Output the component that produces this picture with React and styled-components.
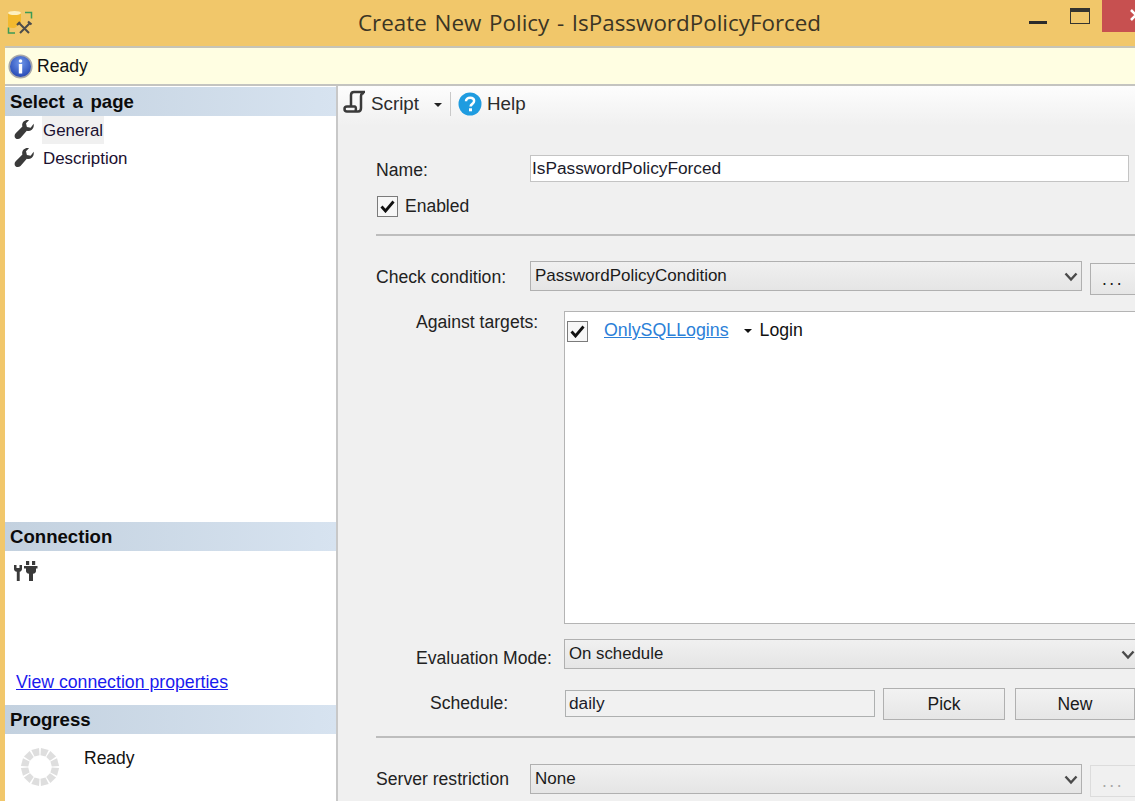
import React from "react";
import styled, { createGlobalStyle } from "styled-components";

const Global = createGlobalStyle`
  html, body { margin: 0; padding: 0; background: #f0f0f0; overflow: hidden; }
  * { box-sizing: border-box; }
`;
const FONT = `"Liberation Sans", Arial, sans-serif`;

const Page = styled.div`
  width: 1135px; height: 801px; overflow: hidden; display: flex; flex-direction: column;
  background: #f1c76b; font-family: ${FONT}; font-size: 17.5px; color: #111;
`;
const TitleBar = styled.header`
  height: 46px; flex: none; display: flex; align-items: flex-start; background: #f1c76a;
`;
const AppIcon = styled.svg`
  width: 26px; height: 26px; margin: 10px 0 0 7px; flex: none;
`;
const Title = styled.h1`
  margin: 10px 0 0 325px; font: 400 22.4px/26px "Open Sans", sans-serif; word-spacing: 1.9px; color: #3b3524; white-space: nowrap;
`;
const WindowControls = styled.div`
  margin-left: auto; display: flex; align-items: flex-start; height: 32px;
`;
const MinimizeGlyph = styled.span`
  width: 18px; height: 3px; margin: 21px 23px 0 0; background: #2b2b2b;
`;
const MaximizeGlyph = styled.span`
  width: 20px; height: 16px; margin: 8px 12px 0 0; border: 1.5px solid #35342f; border-top-width: 4px;
`;
const CloseButton = styled.div`
  width: 33px; height: 32px; background: #c75050; padding: 9px 0 0 28px; overflow: hidden;
`;
const Client = styled.div`
  flex: 1; min-height: 0; margin-left: 5px; display: flex; flex-direction: column; background: #f0f0f0;
`;
const InfoBar = styled.div`
  height: 40px; flex: none; display: flex; align-items: center; gap: 4px; padding: 1px 0 0 3px;
  background: #fffee2; border-top: 2px solid #c6c4b6; border-bottom: 2px solid #c4c4c0; font-size: 17.6px;
`;
const Panels = styled.div`
  flex: 1; min-height: 0; display: flex;
`;
const Sidebar = styled.aside`
  width: 333px; flex: none; display: flex; flex-direction: column; background: #fff;
  border-right: 2px solid #c8c8c8; padding-top: 1px;
`;
const SectionHeader = styled.h2`
  margin: 0; height: 29px; padding-left: 5px; flex: none; font: 700 18.6px/30px ${FONT}; color: #0b0b0b;
  word-spacing: 2.5px; background: linear-gradient(90deg, #c3d1df, #d7e3f0);
`;
const PageList = styled.div`
  flex: 1; display: flex; flex-direction: column; padding: 0 0 0 9px;
`;
const PageItem = styled.div`
  height: 28px; display: flex; align-items: center; gap: 8px; font-size: 16.9px; color: #1b1030;
`;
const PageLabel = styled.span`
  padding: 0 1px; height: 28px; line-height: 29px;
  background: ${p => (p.$selected ? "#f0f0f0" : "transparent")};
`;
const ConnectionBody = styled.div`
  height: 154px; flex: none; display: flex; flex-direction: column; padding: 9px 0 0 9px;
`;
const ConnectionLink = styled.a`
  margin: auto 0 12px 2px; color: #1a1aee; text-decoration: underline; font-size: 17.7px;
`;
const ProgressBody = styled.div`
  height: 67px; flex: none; display: flex; align-items: flex-start; padding: 13px 0 0 15px; gap: 24px;
`;
const ProgressText = styled.span`
  margin-top: 1px; font-size: 17.5px;
`;
const Main = styled.main`
  flex: 1; min-width: 0; overflow: hidden; display: flex; flex-direction: column;
`;
const Toolbar = styled.div`
  height: 40px; flex: none; display: flex; align-items: flex-start; padding: 4px 0 0 5px; font-size: 18.8px; color: #2c2c2c;
  background: linear-gradient(#fdfdfd, #f0f0f0);
`;
const ToolLabel = styled.span`
  margin: 3px 0 0 ${p => p.$gap}px; line-height: 22px;
`;
const Caret = styled.span`
  width: 0; height: 0; margin: 13px 8px 0 15px; border: 4px solid transparent; border-top-color: #222; border-bottom: 0;
`;
const ToolSeparator = styled.span`
  width: 1px; height: 24px; margin: 2px 7px 0 0; background: #c9c9c9;
`;
const Form = styled.div`
  flex: 1; padding: 29px 0 0 38px; width: 798px; display: flex; flex-direction: column; align-items: flex-start;
`;
const Row = styled.div`
  display: flex; align-items: flex-start; margin-top: ${p => p.$top || 0}px; flex: none;
`;
const Label = styled.label`
  flex: none; width: ${p => p.$width}px; padding-top: ${p => p.$pad}px; padding-left: ${p => p.$indent || 0}px;
  font-size: 17.6px; line-height: 20px; color: #222; white-space: nowrap;
`;
const TextField = styled.div`
  width: ${p => p.$width}px; height: 27px; flex: none; border: 1.5px solid ${p => p.$muted ? "#aeb0b0" : "#c4c4c4"};
  background: ${p => p.$muted ? "#f1f1f1" : "#fff"}; padding-left: ${p => p.$inset}px; font-size: 17.3px; line-height: 25px; color: #1b1b2b;
`;
const CheckRow = styled.div`
  display: flex; align-items: center; gap: 7px; margin: 14px 0 0 1px; font-size: 17.5px; color: #222;
`;
const CheckBox = styled.span`
  width: 21px; height: 21px; flex: none; display: flex; align-items: center; justify-content: center;
  background: #f7f7f7; border: 1.5px solid #7b7b7b;
`;
const Divider = styled.hr`
  width: 100%; height: 2px; border: 0; flex: none; margin: ${p => p.$top}px 0 0; background: #bdbdbd;
`;
const Select = styled.div`
  width: ${p => p.$width}px; height: 30px; flex: none; display: flex; align-items: center; justify-content: space-between;
  padding: 0 ${p => p.$arrow}px 0 4px; border: 1.5px solid #b0b0b0; font-size: ${p => p.$size || 17}px; color: #1b1b1b;
  background: linear-gradient(#f0f0f0, #e5e5e5);
`;
const Chevron = styled.svg`
  width: 14px; height: 10px; flex: none; margin-top: 1px;
`;
const Button = styled.button`
  width: ${p => p.$width}px; height: 32px; flex: none; margin: ${p => p.$top || 0}px 0 0 ${p => p.$left}px;
  padding: 0; border: 1.5px solid #b0b0b0;
  background: linear-gradient(#f2f2f2, #e6e6e6);
  font: 400 17.5px ${FONT}; color: #1b1b1b;
`;
const DotsButton = styled(Button)`
  padding-left: 11px; text-align: left; letter-spacing: 2.5px;
  ${p => p.disabled && "border-color: #dcdcdc; background: #f0f0f0; color: #a8a8a8;"}
`;
const TargetList = styled.div`
  width: 580px; height: 313px; flex: none; display: flex; align-items: flex-start; gap: 16px; padding: 8px 0 0 2px;
  background: #fff; border: 1.5px solid #b4b4b4;
`;
const TargetCheck = styled(CheckBox)`
  margin-top: 1px;
`;
const TargetLink = styled.a`
  color: #2b7fd8; text-decoration: underline; font-size: 17.8px; line-height: 20px;
`;
const TargetType = styled.span`
  display: flex; align-items: center; gap: 8px; margin-left: -1px; font-size: 17.7px; line-height: 20px; color: #111;
`;
const SmallCaret = styled.span`
  width: 0; height: 0; margin: 1px 0 0 0; border: 4px solid transparent; border-top-color: #111; border-bottom: 0;
`;

const Wrench = () => (
  <svg width="20" height="20" viewBox="0 0 20 20" style={{ flex: "none" }}>
    <path fill="#3a3a3a" d="M19.6 3.800c.5 2.300-.1 4.500-1.800 5.900-1.500 1.200-3.400 1.500-5 1L6.500 18c-1.300 1.400-3.700 1.500-5 .2-1.300-1.300-1.200-3.600.2-4.900l6.700-6.700C7.900 4.900 8.200 3 9.600 1.600 11 .2 13.200-.3 15 .3l-3 3 .9 3.700 3.800.8z" />
  </svg>
);
const ChevronIcon = () => (
  <Chevron viewBox="0 0 14 10">
    <path d="M1.500 1.500 7 7.500l5.500-6" fill="none" stroke="#4a4a4a" strokeWidth="2.400" />
  </Chevron>
);
const Tick = () => (
  <svg width="15" height="13" viewBox="0 0 15 13">
    <path d="M1.500 6.500 5.500 11 13.500 1.500" fill="none" stroke="#111" strokeWidth="2.800" />
  </svg>
);
const spokes = Array.from({ length: 12 }, (_, i) => i * 30 + 15);

export default function App() {
  return (
    <Page>
      <Global />
      <TitleBar>
        <AppIcon viewBox="0 0 26 26">
          <path d="M1 3v13c0 1 2 2 5 2 2 0 3-.5 4-2l4-4V3z" fill="#f2b92e" />
          <ellipse cx="7.500" cy="3" rx="6.500" ry="2" fill="#fdf0c0" />
          <path d="M18 2.500h6.500v6M1.500 17.500v5.500h6.500" fill="none" stroke="#3d9a55" strokeWidth="1.500" />
          <path d="M12 13 22 23M23 13 13 23" stroke="#4b4b4b" strokeWidth="2" />
          <path d="M10 15l3-3M21 11.500l3.500 3" stroke="#4b4b4b" strokeWidth="2.200" fill="none" />
        </AppIcon>
        <Title>Create New Policy - IsPasswordPolicyForced</Title>
        <WindowControls>
          <MinimizeGlyph />
          <MaximizeGlyph />
          <CloseButton>
            <svg width="12" height="12" viewBox="0 0 12 12" style={{ display: "block" }}>
              <path d="M1 1l10 10M11 1 1 11" stroke="#fff" strokeWidth="2.600" />
            </svg>
          </CloseButton>
        </WindowControls>
      </TitleBar>
      <Client>
        <InfoBar>
          <svg width="25" height="25" viewBox="0 0 25 25" style={{ flex: "none" }}>
            <defs>
              <radialGradient id="infoFill" cx="50%" cy="35%" r="70%">
                <stop offset="0" stopColor="#6f97ea" />
                <stop offset="1" stopColor="#1d3fae" />
              </radialGradient>
            </defs>
            <circle cx="12.500" cy="12.500" r="11.300" fill="url(#infoFill)" stroke="#a9a9a9" strokeWidth="1.600" />
            <circle cx="12.500" cy="7" r="1.800" fill="#fff" />
            <rect x="10.800" y="10" width="3.400" height="9.500" fill="#fff" />
          </svg>
          Ready
        </InfoBar>
        <Panels>
          <Sidebar>
            <SectionHeader>Select a page</SectionHeader>
            <PageList>
              <PageItem><Wrench /><PageLabel $selected>General</PageLabel></PageItem>
              <PageItem><Wrench /><PageLabel>Description</PageLabel></PageItem>
            </PageList>
            <SectionHeader>Connection</SectionHeader>
            <ConnectionBody>
              <svg width="24" height="22" viewBox="0 0 24 22">
                <path fill="#3a3a3a" d="M0 5h2.500v3h3V5H8v4c0 1.500-1 2.500-2.300 2.800V21H2.800v-9.200C1 11.500 0 10.500 0 9z" />
                <path fill="#3a3a3a" d="M12 1h3.200v4H12zM18 1h3.200v4H18zM10 6h13.500v2.500H22V11c0 1.500-1 2.500-3 2.800V21h-4v-7.200c-2-.3-3-1.300-3-2.800V8.500h-2z" />
              </svg>
              <ConnectionLink>View connection properties</ConnectionLink>
            </ConnectionBody>
            <SectionHeader>Progress</SectionHeader>
            <ProgressBody>
              <svg width="40" height="40" viewBox="0 0 40 40" style={{ flex: "none" }}>
                {spokes.map(a => (
                  <path key={a} d="M16 1.300h8L22.600 8.500h-5.200z" fill="#dedede" transform={`rotate(${a} 20 20)`} />
                ))}
              </svg>
              <ProgressText>Ready</ProgressText>
            </ProgressBody>
          </Sidebar>
          <Main>
            <Toolbar>
              <svg width="24" height="26" viewBox="0 0 24 26" style={{ flex: "none" }}>
                <path d="M8 16V5c0-2 1-3 3-3h11" fill="none" stroke="#3a3a3a" strokeWidth="2.500" />
                <path d="M21 3c-2 0-3 1-3 3v12c0 2-1 3.500-3 3.500H4c-1.500 0-2.500-1-2.500-2.500 0-1.500 1-2.500 2.500-2.500h8c1 .5 1 3 .5 5" fill="none" stroke="#3a3a3a" strokeWidth="2.500" />
              </svg>
              <ToolLabel $gap={4}>Script</ToolLabel>
              <Caret />
              <ToolSeparator />
              <svg width="24" height="24" viewBox="0 0 24 24" style={{ flex: "none", marginTop: "2px" }}>
                <circle cx="12" cy="12" r="11.500" fill="#1f9ce0" />
                <path d="M8 9.300c0-2.300 1.800-3.600 4.100-3.600 2.400 0 4 1.300 4 3.300 0 1.500-.8 2.300-2 3.100-1.100.7-1.500 1.200-1.500 2.400" fill="none" stroke="#fff" strokeWidth="2.500" />
                <rect x="11" y="16.300" width="3" height="3" fill="#fff" />
              </svg>
              <ToolLabel $gap={5}>Help</ToolLabel>
            </Toolbar>
            <Form>
              <Row>
                <Label $width="154" $pad={5}>Name:</Label>
                <TextField $width="599" $inset={1}>IsPasswordPolicyForced</TextField>
              </Row>
              <CheckRow><CheckBox><Tick /></CheckBox>Enabled</CheckRow>
              <Divider $top={17} />
              <Row $top={25}>
                <Label $width="154" $pad={6}>Check condition:</Label>
                <Select $width="552" $arrow={3}>PasswordPolicyCondition<ChevronIcon /></Select>
                <DotsButton $width="50" $left={8} $top={2}>...</DotsButton>
              </Row>
              <Row $top={16}>
                <Label $width="188" $indent={40} $pad={1}>Against targets:</Label>
                <TargetList>
                  <TargetCheck><Tick /></TargetCheck>
                  <TargetLink>OnlySQLLogins</TargetLink>
                  <TargetType><SmallCaret />Login</TargetType>
                </TargetList>
              </Row>
              <Row $top={15}>
                <Label $width="188" $indent={40} $pad={9}>Evaluation Mode:</Label>
                <Select $width="573" $arrow={1} $size={16.8}>On schedule<ChevronIcon /></Select>
              </Row>
              <Row $top={21}>
                <Label $width="189" $indent={54} $pad={3}>Schedule:</Label>
                <TextField $width="310" $muted $inset={3}>daily</TextField>
                <Button $width="122" $left={8} $top={-2}>Pick</Button>
                <Button $width="120" $left={10} $top={-2}>New</Button>
              </Row>
              <Divider $top={16} />
              <Row $top={26}>
                <Label $width="154" $pad={5}>Server restriction</Label>
                <Select $width="552" $arrow={3}>None<ChevronIcon /></Select>
                <DotsButton disabled $width="50" $left={8} $top={1}>...</DotsButton>
              </Row>
            </Form>
          </Main>
        </Panels>
      </Client>
    </Page>
  );
}
